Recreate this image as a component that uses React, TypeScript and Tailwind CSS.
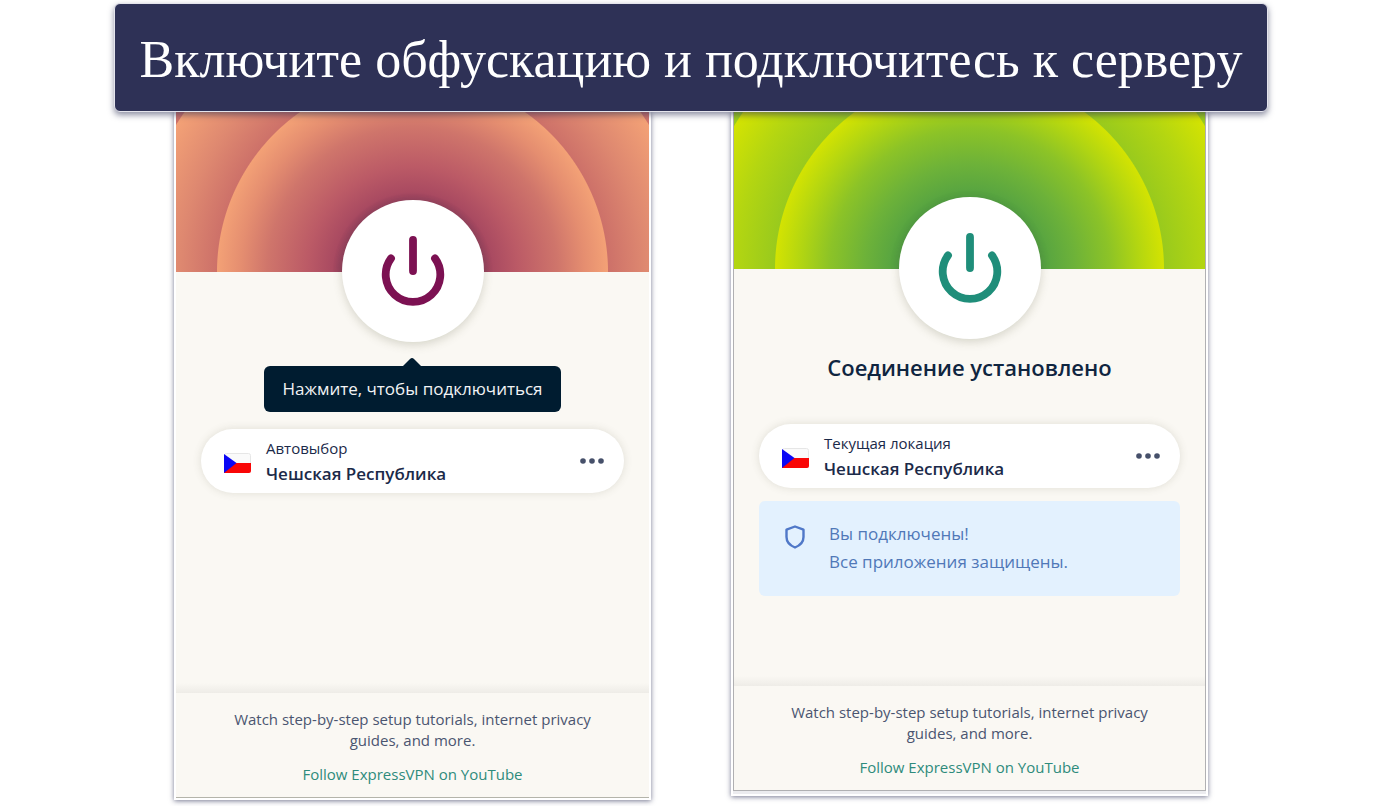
// src/App.tsx
import type { ReactNode } from "react";

export default function App() {
  return (
    <main className="min-h-screen bg-white pt-[3px] pl-0.5 font-['Open_Sans','Noto_Sans',sans-serif] text-[#1b2a49]">
      <header className="relative z-10 mx-auto max-w-[1154px] rounded-md border border-[#e4e4ec] bg-[#2e3156] px-4 pt-[22px] pb-[17px] shadow-[0_3px_6px_rgba(46,49,86,0.55)]">
        <h1 className="text-center font-['Liberation_Serif',serif] text-[52px] leading-[68px] text-white">
          Включите обфускацию и подключитесь к серверу
        </h1>
      </header>

      <div className="mx-auto grid max-w-[1034px] grid-cols-1 items-start gap-20 md:grid-cols-2">
        <section className="border-x-2 border-b-2 border-white bg-[#faf8f3] shadow-[0_1px_5px_rgba(46,49,86,0.65)]">
          <div className="border-b border-[#b4b4aa]">
            <div className="h-40 bg-[radial-gradient(circle_at_50%_100%,#8f3d5b_70px,#a94a61_80px,#bb5a66_105px,#cf756b_145px,#e58e70_172px,#f3a176_195px,#cd7169_196px,#de8870_232px,#f3a176_278px,#cd7169_279px)]" />
            <PowerButton label="Подключиться" className="text-[#7c1152]" />
            <div className="flex min-h-[341px] flex-col items-stretch px-[25px] pt-6">
              <div
                role="tooltip"
                className="relative mx-auto rounded-md bg-[#001c30] px-[18px] py-[11px] text-[17px] leading-6 text-[#f2f3f5]"
              >
                <svg
                  className="absolute -top-2 left-1/2 -ml-[10px]"
                  width="20"
                  height="9"
                  viewBox="0 0 20 9"
                  fill="#001c30"
                >
                  <path d="M0 9l8-8q2-2 4 0l8 8z" />
                </svg>
                Нажмите, чтобы подключиться
              </div>
              <LocationRow caption="Автовыбор" className="mt-[17px]" />
            </div>
            <CardFooter />
          </div>
        </section>

        <section className="border-x-2 border-b-2 border-white bg-[#ececef] pb-[3px] shadow-[0_1px_5px_rgba(46,49,86,0.65)]">
          <div className="border-x border-b border-[#b0b0b2] bg-[#faf8f3]">
            <div className="h-[157px] bg-[radial-gradient(circle_at_50%_100%,#4f9c40_70px,#5aa640_80px,#6db239_105px,#8cc327_140px,#b1d512_168px,#d3e302_194px,#99ca1d_195px,#b4d611_236px,#d3e302_275px,#99ca1d_276px)]" />
            <PowerButton label="Отключиться" className="text-[#1f8e7a]" />
            <div className="flex min-h-[337px] flex-col px-[25px] pt-3">
              <h2 className="text-center text-[22px] leading-8 font-semibold text-[#0f2540]">
                Соединение установлено
              </h2>
              <LocationRow caption="Текущая локация" className="mt-[41px]" />
              <div className="mt-[13px] flex gap-6 rounded-md bg-[#e3f1fe] px-[26px] pt-[19px] pb-5 text-[#5078b8]">
                <ShieldIcon />
                <p className="text-[17px] leading-7">
                  Вы подключены!
                  <br />
                  Все приложения защищены.
                </p>
              </div>
            </div>
            <CardFooter />
          </div>
        </section>
      </div>
    </main>
  );
}

interface PowerButtonProps {
  label: string;
  className: string;
}

function PowerButton({ label, className }: PowerButtonProps) {
  return (
    <button
      aria-label={label}
      className={`relative mx-auto -mt-[72px] flex size-[142px] items-center justify-center rounded-full bg-white shadow-[0_3px_10px_rgba(90,90,60,0.22)] ${className}`}
    >
      <svg
        width="70"
        height="76"
        viewBox="0 0 70 76"
        fill="none"
        stroke="currentColor"
        strokeWidth="7.8"
        strokeLinecap="round"
      >
        <path d="M35 7v31" />
        <path d="M13 25.400a27.300 27.300 0 1 0 44 0" />
      </svg>
    </button>
  );
}

interface LocationRowProps {
  caption: ReactNode;
  className?: string;
}

function LocationRow({ caption, className }: LocationRowProps) {
  return (
    <div
      className={`flex h-16 items-center rounded-full bg-white pr-[18px] pl-[23px] shadow-[0_0_9px_rgba(90,90,60,0.16)] ${className}`}
    >
      <CzechFlag />
      <div className="ml-[15px] flex-1">
        <div className="text-[15px] leading-[25px]">{caption}</div>
        <div className="text-[17px] leading-[25px] font-semibold">
          Чешская Республика
        </div>
      </div>
      <button aria-label="Ещё" className="text-[#46506a]">
        <svg width="28" height="20" viewBox="0 0 28 20" fill="currentColor">
          <circle cx="5" cy="10" r="2.800" />
          <circle cx="14" cy="10" r="2.800" />
          <circle cx="23" cy="10" r="2.800" />
        </svg>
      </button>
    </div>
  );
}

function CardFooter() {
  return (
    <footer className="text-center text-[15px] leading-[21px] text-[#4a5570]">
      <div className="h-[10px] bg-linear-to-b from-[#faf8f3] to-[#eeece7]" />
      <div className="px-10 pt-4 pb-3">
        <p className="mx-auto max-w-[370px]">
          Watch step-by-step setup tutorials, internet privacy guides, and more.
        </p>
        <a href="#youtube" className="mt-[13px] inline-block text-[#2e8b7c]">
          Follow ExpressVPN on YouTube
        </a>
      </div>
    </footer>
  );
}

function CzechFlag() {
  return (
    <svg className="mt-1" width="27" height="20" viewBox="0 0 27 20">
      <rect x="0.500" y="0.500" width="26" height="19" rx="2" fill="#fafafa" stroke="#e6e6e6" />
      <path d="M0 10h27v8a2 2 0 0 1-2 2H0z" fill="#f90606" />
      <path d="M0 1l12.500 9L0 20z" fill="#0a06f5" />
    </svg>
  );
}

function ShieldIcon() {
  return (
    <svg
      className="mt-[5px]"
      width="20"
      height="24"
      viewBox="0 0 20 24"
      fill="none"
      stroke="#5078c8"
      strokeWidth="2.400"
      strokeLinejoin="round"
    >
      <path d="M10 1.500l8.500 3.200v7.300c0 4.500-3.500 8.500-8.500 10.500C5 20.500 1.500 16.500 1.500 12V4.700z" />
    </svg>
  );
}
